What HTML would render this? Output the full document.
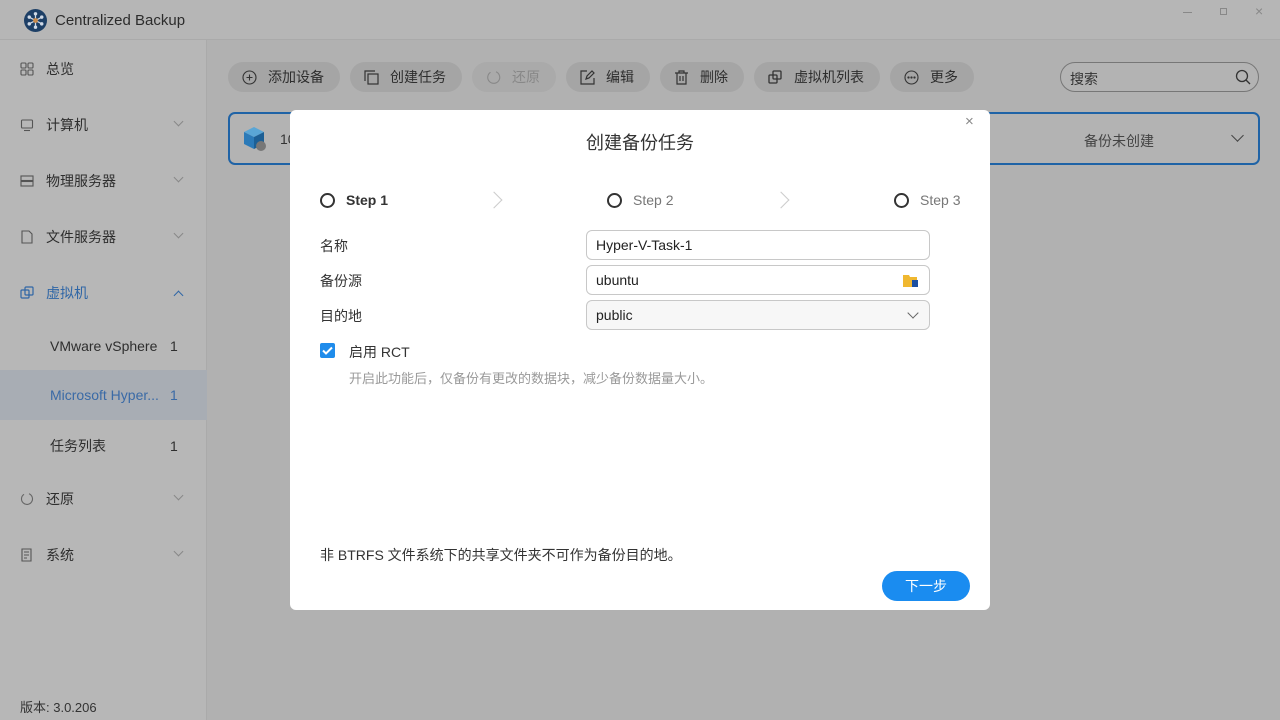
<!DOCTYPE html>
<html><head><meta charset="utf-8"><style>
*{box-sizing:border-box;margin:0;padding:0}
body{width:1280px;height:720px;overflow:hidden;background:#b1b1b1;font-family:"Liberation Sans","Noto Sans CJK SC",sans-serif;color:#333;position:relative;font-size:14px}
.title{position:absolute;left:0;top:0;width:1280px;height:40px;background:#b6b6b6;border-bottom:1px solid #aaa}
.side{position:absolute;left:0;top:40px;width:207px;height:680px;background:#b7b7b7;border-right:1px solid #aaa}
.nav{position:absolute;left:0;width:207px;height:50px;display:flex;align-items:center;font-size:14px;color:#2e2e2e}
.nav .ic{position:absolute;left:20px;top:50%;transform:translateY(-50%);width:14px;height:14px}
.nav .t{position:absolute;left:46px}
.nav .ch{position:absolute;left:175px;top:18px;width:7px;height:7px;border-right:1px solid #888;border-bottom:1px solid #888;transform:rotate(45deg)}
.nav .ch.up{transform:rotate(-135deg);top:24px}
.nav .n{position:absolute;left:170px}
.btn{position:absolute;top:62px;height:30px;border-radius:15px;background:#a5a5a5;font-size:14px;color:#2e2e2e;display:flex;align-items:center}
.btn svg{position:absolute;left:14px;top:8px}
.btn span{position:absolute;left:40px}
.modal{position:absolute;left:290px;top:110px;width:700px;height:500px;background:#fff;border-radius:6px}
.lbl{position:absolute;left:30px;font-size:14px;color:#333}
.inp{position:absolute;left:296px;width:344px;height:30px;border:1px solid #c8c8c8;border-radius:6px;font-size:14px;padding-left:9px;line-height:28px;color:#222}
.step{position:absolute;top:82px;font-size:14px;display:flex;align-items:center}
.step i{display:inline-block;width:15px;height:15px;border:2px solid #333;border-radius:50%;margin-right:11px}
.arr{position:absolute;top:84px;width:12px;height:12px;border-right:1px solid #ccc;border-top:1px solid #ccc;transform:rotate(45deg)}
</style></head><body>
<div class="title">
<svg style="position:absolute;left:24px;top:9px" width="23" height="23" viewBox="0 0 24 24"><circle cx="12" cy="12" r="12" fill="#1d3f66"/><g stroke="#cfd9e6" stroke-width="1.3"><line x1="12" y1="5" x2="12" y2="19"/><line x1="5.5" y1="8.5" x2="18.5" y2="15.5"/><line x1="5.5" y1="15.5" x2="18.5" y2="8.5"/></g><g fill="#cfd9e6"><circle cx="12" cy="5" r="1.8"/><circle cx="12" cy="19" r="1.8"/><circle cx="5.5" cy="8.5" r="1.8"/><circle cx="18.5" cy="15.5" r="1.8"/><circle cx="5.5" cy="15.5" r="1.8"/><circle cx="18.5" cy="8.5" r="1.8"/></g><circle cx="12" cy="12" r="2.5" fill="#c98a4a"/></svg>
<div style="position:absolute;left:55px;top:12px;font-size:15px;color:#2c2c2c">Centralized Backup</div>
<div style="position:absolute;left:1183px;top:12px;width:9px;border-top:1px solid #888"></div>
<div style="position:absolute;left:1220px;top:8px;width:7px;height:7px;border:1px solid #888"></div>
<div style="position:absolute;left:1255px;top:3px;font-size:14px;color:#888">×</div>
</div>
<div class="side">
<div class="nav" style="top:4px"><svg class="ic" viewBox="0 0 14 14" fill="none" stroke="#555" stroke-width="1.1"><rect x="1" y="1" width="5" height="5" rx="1"/><rect x="8" y="1" width="5" height="5" rx="1"/><rect x="1" y="8" width="5" height="5" rx="1"/><rect x="8" y="8" width="5" height="5" rx="1"/></svg><span class="t">总览</span></div>
<div class="nav" style="top:60px"><svg class="ic" viewBox="0 0 14 14" fill="none" stroke="#555" stroke-width="1.1"><rect x="1.5" y="2" width="11" height="8" rx="1"/><line x1="4" y1="12.5" x2="10" y2="12.5"/></svg><span class="t">计算机</span><i class="ch"></i></div>
<div class="nav" style="top:116px"><svg class="ic" viewBox="0 0 14 14" fill="none" stroke="#555" stroke-width="1.1"><rect x="1" y="2" width="12" height="4.5"/><rect x="1" y="7.5" width="12" height="4.5"/></svg><span class="t">物理服务器</span><i class="ch"></i></div>
<div class="nav" style="top:172px"><svg class="ic" viewBox="0 0 14 14" fill="none" stroke="#555" stroke-width="1.1"><path d="M2 1h7l3 3v9H2z"/></svg><span class="t">文件服务器</span><i class="ch"></i></div>
<div class="nav" style="top:228px;color:#2f66a6"><svg class="ic" viewBox="0 0 14 14" fill="none" stroke="#2f66a6" stroke-width="1.2"><rect x="1" y="4" width="8" height="8" rx="1"/><rect x="5" y="1" width="8" height="8" rx="1"/></svg><span class="t">虚拟机</span><i class="ch up" style="border-color:#2f66a6"></i></div>
<div class="nav" style="top:281px"><span class="t" style="left:50px">VMware vSphere</span><span class="n">1</span></div>
<div class="nav" style="top:330px;background:#a8adb4;color:#3a6aa6"><span class="t" style="left:50px">Microsoft Hyper...</span><span class="n">1</span></div>
<div class="nav" style="top:381px"><span class="t" style="left:50px">任务列表</span><span class="n">1</span></div>
<div class="nav" style="top:434px"><svg class="ic" viewBox="0 0 14 14" fill="none" stroke="#666" stroke-width="1.1"><path d="M9 1.8A5.5 5.5 0 1 1 4 2.3"/></svg><span class="t">还原</span><i class="ch"></i></div>
<div class="nav" style="top:490px"><svg class="ic" viewBox="0 0 14 14" fill="none" stroke="#555" stroke-width="1.1"><path d="M2 1h9v12H2z M4 4h5 M4 7h5 M4 10h3"/></svg><span class="t">系统</span><i class="ch"></i></div>
<div style="position:absolute;left:20px;top:657px;font-size:13px;color:#333">版本: 3.0.206</div>
</div>
<div class="btn" style="left:228px;width:112px"><svg width="15" height="15" viewBox="0 0 15 15" fill="none" stroke="#333" stroke-width="1.1"><circle cx="7.5" cy="7.5" r="6.5"/><path d="M7.5 4.5v6M4.5 7.5h6"/></svg><span>添加设备</span></div>
<div class="btn" style="left:350px;width:112px"><svg width="15" height="15" viewBox="0 0 15 15" fill="none" stroke="#333" stroke-width="1.2"><path d="M1 11V1h10"/><rect x="4" y="4" width="10" height="10"/></svg><span>创建任务</span></div>
<div class="btn" style="left:472px;width:84px;background:#aaa;color:#888"><svg width="15" height="15" viewBox="0 0 15 15" fill="none" stroke="#888" stroke-width="1.1"><path d="M10 1.8A6 6 0 1 1 4.5 2.3"/></svg><span>还原</span></div>
<div class="btn" style="left:566px;width:84px"><svg width="15" height="15" viewBox="0 0 15 15" fill="none" stroke="#333" stroke-width="1.2"><path d="M7 1H1v13h13V8M6 9l1-3 5-5 2 2-5 5z"/></svg><span>编辑</span></div>
<div class="btn" style="left:660px;width:84px"><svg width="15" height="15" viewBox="0 0 15 15" fill="none" stroke="#333" stroke-width="1.2"><path d="M1 3h13M5 3V1h5v2M3 3v11h9V3M6 6v5M9 6v5"/></svg><span>删除</span></div>
<div class="btn" style="left:754px;width:126px"><svg width="15" height="15" viewBox="0 0 15 15" fill="none" stroke="#333" stroke-width="1.3"><rect x="1" y="5" width="8" height="8" rx="1"/><rect x="5" y="1" width="8" height="8" rx="1"/></svg><span>虚拟机列表</span></div>
<div class="btn" style="left:890px;width:84px"><svg width="15" height="15" viewBox="0 0 15 15" fill="none" stroke="#333" stroke-width="1.1"><circle cx="7.5" cy="7.5" r="6.5"/><circle cx="4.5" cy="7.5" r=".6" fill="#333"/><circle cx="7.5" cy="7.5" r=".6" fill="#333"/><circle cx="10.5" cy="7.5" r=".6" fill="#333"/></svg><span>更多</span></div>
<div style="position:absolute;left:1060px;top:62px;width:199px;height:30px;border:1px solid #777;border-radius:15px;background:#b3b3b3"><span style="position:absolute;left:9px;top:6px;font-size:14px;color:#333">搜索</span><svg style="position:absolute;right:7px;top:6px" width="16" height="16" viewBox="0 0 16 16" fill="none" stroke="#333" stroke-width="1.3"><circle cx="7" cy="7" r="5.5"/><path d="M11 11l4 4"/></svg></div>
<div style="position:absolute;left:228px;top:112px;width:1032px;height:53px;border:2px solid #1f63a6;border-radius:7px;background:#b3b3b3">
<svg style="position:absolute;left:13px;top:12px" width="24" height="26" viewBox="0 0 24 26"><path d="M11 1l10 5-10 5L1 6z" fill="#5aa6d6"/><path d="M1 6l10 5v12L1 18z" fill="#2b7ab8"/><path d="M21 6l-10 5v12l10-5z" fill="#1c5f95"/><circle cx="18" cy="20" r="5" fill="#777"/></svg>
<span style="position:absolute;left:50px;top:17px;font-size:14px">10</span>
<span style="position:absolute;left:854px;top:17px;font-size:14px;color:#444">备份未创建</span>
<i style="position:absolute;left:1003px;top:17px;width:9px;height:9px;border-right:1px solid #444;border-bottom:1px solid #444;transform:rotate(45deg)"></i>
</div>
<div class="modal">
<div style="position:absolute;left:0;width:700px;top:19px;text-align:center;font-size:18px;color:#333">创建备份任务</div>
<div style="position:absolute;left:675px;top:3px;font-size:15px;color:#888">×</div>
<div class="step" style="left:30px;font-weight:bold;color:#333"><i></i>Step 1</div>
<div class="arr" style="left:198px"></div>
<div class="step" style="left:317px;color:#777"><i></i>Step 2</div>
<div class="arr" style="left:485px"></div>
<div class="step" style="left:604px;color:#777"><i></i>Step 3</div>
<div class="lbl" style="top:126px">名称</div>
<div class="inp" style="top:120px">Hyper-V-Task-1</div>
<div class="lbl" style="top:161px">备份源</div>
<div class="inp" style="top:155px">ubuntu<svg style="position:absolute;right:10px;top:8px" width="16" height="13" viewBox="0 0 16 13"><path d="M0 1h6l1 2h7v10H0z" fill="#f0b830"/><rect x="9" y="6" width="6" height="7" fill="#1c4fa0"/></svg></div>
<div class="lbl" style="top:196px">目的地</div>
<div class="inp" style="top:190px;background:#f7f7f7">public<i style="position:absolute;right:12px;top:8px;width:8px;height:8px;border-right:1px solid #666;border-bottom:1px solid #666;transform:rotate(45deg)"></i></div>
<div style="position:absolute;left:30px;top:233px;width:15px;height:15px;background:#1f8ceb;border-radius:2px"><svg width="15" height="15" viewBox="0 0 15 15" fill="none" stroke="#fff" stroke-width="2"><path d="M3 7.5l3 3 6-6"/></svg></div>
<div style="position:absolute;left:59px;top:232px;font-size:14px">启用 RCT</div>
<div style="position:absolute;left:59px;top:258px;font-size:13px;color:#999">开启此功能后，仅备份有更改的数据块，减少备份数据量大小。</div>
<div style="position:absolute;left:30px;top:435px;font-size:14px">非 BTRFS 文件系统下的共享文件夹不可作为备份目的地。</div>
<div style="position:absolute;left:592px;top:461px;width:88px;height:30px;border-radius:15px;background:#1a8cf0;color:#fff;font-size:14px;text-align:center;line-height:30px">下一步</div>
</div>
</body></html>
